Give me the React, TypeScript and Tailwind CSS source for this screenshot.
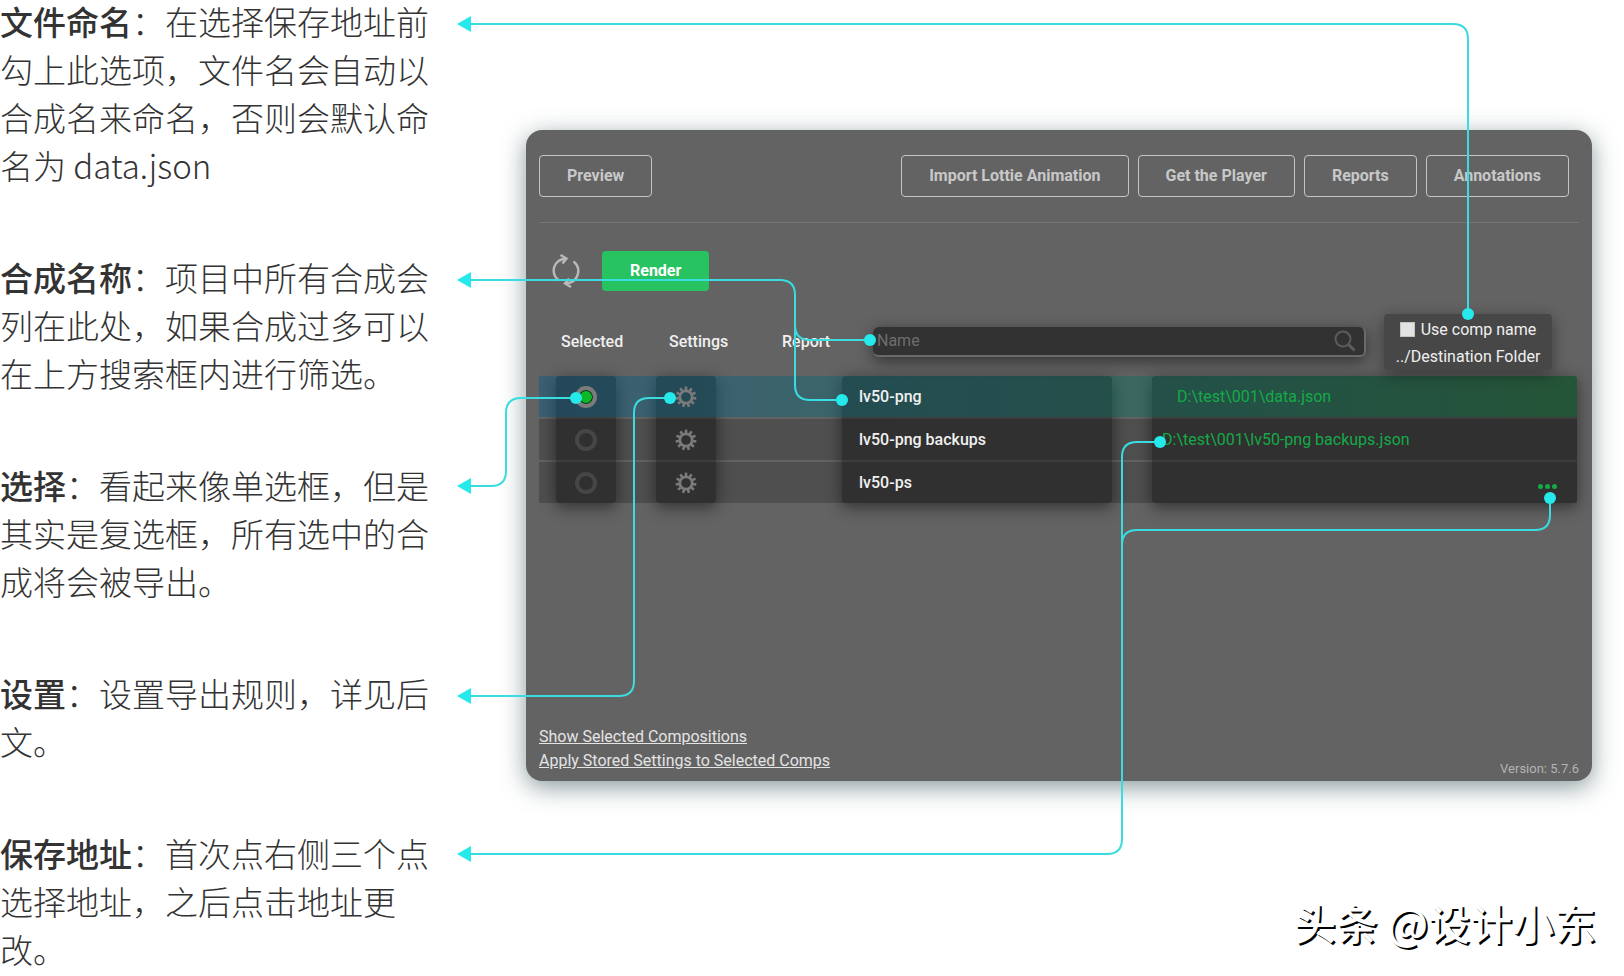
import { useState } from "react";

interface Note {
  title: string;
  text: string;
}

interface Comp {
  id: number;
  name: string;
  destination: string;
  selected: boolean;
  centered?: boolean;
}

const notes: Note[] = [
  { title: "文件命名", text: "在选择保存地址前勾上此选项，文件名会自动以合成名来命名，否则会默认命名为 data.json" },
  { title: "合成名称", text: "项目中所有合成会列在此处，如果合成过多可以在上方搜索框内进行筛选。" },
  { title: "选择", text: "看起来像单选框，但是其实是复选框，所有选中的合成将会被导出。" },
  { title: "设置", text: "设置导出规则，详见后文。" },
  { title: "保存地址", text: "首次点右侧三个点选择地址，之后点击地址更改。" },
];

const initialComps: Comp[] = [
  { id: 1, name: "lv50-png", destination: "D:\\test\\001\\data.json", selected: true, centered: true },
  { id: 2, name: "lv50-png backups", destination: "D:\\test\\001\\lv50-png backups.json", selected: false },
  { id: 3, name: "lv50-ps", destination: "", selected: false },
];

const toolbar = ["Import Lottie Animation", "Get the Player", "Reports", "Annotations"];

const arrows = [24, 280, 486, 696, 854];

const lines = [
  "M470 24H1453Q1468 24 1468 39V314",
  "M470 280H780Q795 280 795 295V385Q795 400 810 400H842",
  "M795 325Q795 340 810 340H870",
  "M470 486H491Q506 486 506 471V413Q506 398 521 398H576",
  "M470 696H619Q634 696 634 681V413Q634 398 649 398H670",
  "M470 854H1107Q1122 854 1122 839V457Q1122 442 1137 442H1160",
  "M1122 545Q1122 530 1137 530H1535Q1550 530 1550 515V498",
];

const dots = [
  [1468, 314],
  [870, 340],
  [842, 400],
  [576, 398],
  [670, 398],
  [1160, 442],
  [1550, 498],
];

function OutlineButton({ label }: { label: string }) {
  return (
    <button className="h-[42px] rounded border border-[#c4c4c4] px-[27px] text-base font-bold text-[#c8c8c8]">
      {label}
    </button>
  );
}

function RefreshIcon() {
  return (
    <svg width="28" height="34" viewBox="0 0 28 34" fill="none" stroke="#b9b9b9" strokeWidth="2.4">
      <path d="M7 26.5C-1.5 20 0 6 14 4.5" />
      <path d="M8.5 1L14.5 4.5L10.5 9.5" />
      <path d="M21.5 7.5C29.5 14 27.5 28 14 29.5" />
      <path d="M19 33L13 29.5L17 24.5" />
    </svg>
  );
}

function GearIcon() {
  const teeth = Array.from({ length: 11 }, (_, i) => (i * 360) / 11);
  return (
    <svg width="22" height="22" viewBox="-11 -11 22 22" fill="none" stroke="#7b7b7b">
      <circle r="6.2" strokeWidth="2.8" />
      {teeth.map((angle) => (
        <path key={angle} d="M0 -7V-10.4" strokeWidth="2.6" transform={`rotate(${angle})`} />
      ))}
    </svg>
  );
}

function SearchIcon() {
  return (
    <svg width="22" height="22" viewBox="0 0 22 22" fill="none" stroke="#5c5c5c">
      <circle cx="9" cy="9" r="7.5" strokeWidth="2" />
      <path d="M14.5 14.5L20.5 20.5" strokeWidth="3" />
    </svg>
  );
}

// Arrows and callout lines that run from the notes to the panel
function Callouts() {
  return (
    <svg className="pointer-events-none absolute left-0 top-0" width="1624" height="976" fill="none">
      {lines.map((d) => (
        <path key={d} d={d} stroke="#3adcdf" strokeWidth="2" />
      ))}
      {arrows.map((y) => (
        <path key={y} d={`M457 ${y}L471 ${y - 8}V${y + 8}Z`} fill="#25e9ea" />
      ))}
      {dots.map(([x, y]) => (
        <circle key={`${x}-${y}`} cx={x} cy={y} r="6" fill="#25e9ea" />
      ))}
    </svg>
  );
}

function App() {
  const [comps, setComps] = useState<Comp[]>(initialComps);
  const [search, setSearch] = useState("");

  const handleToggle = (id: number) => {
    setComps((prev) => prev.map((comp) => (comp.id === id ? { ...comp, selected: !comp.selected } : comp)));
  };

  const visible = comps.filter((comp) => comp.name.includes(search));

  return (
    <div className="relative flex items-start bg-white font-['Roboto',sans-serif]">
      {/* Notes */}
      <div className="-mt-[3px] flex w-[440px] shrink-0 flex-col gap-16 font-['Noto_Sans_CJK_SC',sans-serif] text-[33px] font-light leading-[48px] text-[#333333]">
        {notes.map((note) => (
          <p key={note.title}>
            <strong className="font-medium">{note.title}</strong>：{note.text}
          </p>
        ))}
      </div>

      <div className="ml-[86px] mr-8 mt-[130px] min-w-0 flex-1">
        {/* Panel */}
        <div className="rounded-2xl bg-[#636363] px-[13px] pb-[6px] pt-[25px] shadow-[0_6px_24px_rgba(40,70,75,0.55)]">
          <div className="flex items-center justify-between border-b border-[#757575] pb-[25px] pr-[10px]">
            <OutlineButton label="Preview" />
            <div className="flex gap-[9px]">
              {toolbar.map((label) => (
                <OutlineButton key={label} label={label} />
              ))}
            </div>
          </div>

          <div className="mt-7 flex items-center gap-[22px] pl-[13px]">
            <button aria-label="Refresh">
              <RefreshIcon />
            </button>
            <button className="h-10 rounded bg-[#27c360] px-7 text-base font-bold text-white">Render</button>
          </div>

          {/* Compositions */}
          <div className="relative mt-[19px] pr-[2px]">
            <div className="absolute bottom-[2px] left-0 right-[2px] top-[66px] flex">
              <div className="ml-[17px] w-[60px] rounded bg-[#3c3c3c] shadow-[0_4px_16px_rgba(0,0,0,0.5)]" />
              <div className="ml-10 w-[60px] rounded bg-[#3c3c3c] shadow-[0_4px_16px_rgba(0,0,0,0.5)]" />
              <div className="ml-[126px] w-[270px] rounded bg-[#3c3c3c] shadow-[0_4px_16px_rgba(0,0,0,0.5)]" />
              <div className="ml-10 flex-1 rounded bg-[#3c3c3c] shadow-[0_4px_16px_rgba(0,0,0,0.5)]" />
            </div>
            <table className="relative w-full table-fixed border-separate border-spacing-x-0 border-spacing-y-[2px] text-base font-medium text-[#f0f0f0]">
              <colgroup>
                <col className="w-[97px]" />
                <col className="w-[100px]" />
                <col className="w-[106px]" />
                <col className="w-[310px]" />
                <col />
              </colgroup>
              <thead>
                <tr className="h-[62px] text-left">
                  <th className="pb-[2px] pl-[22px] font-medium">Selected</th>
                  <th className="pb-[2px] pl-[33px] font-medium">Settings</th>
                  <th className="pb-[2px] pl-[46px] font-medium">Report</th>
                  <th colSpan={2} className="pb-[2px] font-normal">
                    <div className="flex items-center gap-[18px] pl-[31px] pr-[25px]">
                      <div className="flex h-[30px] min-w-0 flex-1 items-center rounded-md border-b-2 border-r-2 border-[#6a6a6a] bg-[#323232] pr-2 shadow-[0_4px_16px_rgba(0,0,0,0.5)]">
                        <input
                          type="text"
                          aria-label="Name"
                          placeholder="Name"
                          value={search}
                          onChange={(e) => setSearch(e.target.value)}
                          className="min-w-0 flex-1 bg-transparent pl-1 outline-none placeholder:text-[#6e6e6e]"
                        />
                        <SearchIcon />
                      </div>
                      <div className="flex h-14 w-[168px] flex-col items-center rounded bg-[#474747] pt-[2px] shadow-[0_4px_16px_rgba(0,0,0,0.4)]">
                        <label className="flex items-center gap-[6px] leading-[27px]">
                          <input type="checkbox" className="size-[15px] appearance-none border border-[#c4c4c4] bg-[#e2e2e2] checked:bg-[#27c360]" />
                          Use comp name
                        </label>
                        <span className="leading-[27px]">../Destination Folder</span>
                      </div>
                    </div>
                  </th>
                </tr>
              </thead>
              <tbody>
                {visible.map((comp) => (
                  <tr
                    key={comp.id}
                    className={
                      comp.selected
                        ? "h-[41px] bg-black/20 bg-linear-to-r from-[#008fdb]/25 to-[#00c44a]/25"
                        : "h-[41px] bg-black/20"
                    }
                  >
                    <td className="pl-9">
                      <input
                        type="checkbox"
                        aria-label={`Select ${comp.name}`}
                        checked={comp.selected}
                        onChange={() => handleToggle(comp.id)}
                        className="block size-[22px] appearance-none rounded-full border-4 border-[#464646] checked:border-[#7b7b7b] checked:bg-[#0cb828] checked:shadow-[inset_0_0_0_1px_#10231a]"
                      />
                    </td>
                    <td className="pl-[39px]">
                      <button aria-label={`Settings for ${comp.name}`} className="block">
                        <GearIcon />
                      </button>
                    </td>
                    <td></td>
                    <td className="pl-[17px]">{comp.name}</td>
                    <td className={comp.centered ? "pl-[25px] font-normal" : "pl-[10px] font-normal"}>
                      {comp.destination ? (
                        <button className="text-[#14aa48]">{comp.destination}</button>
                      ) : (
                        <button aria-label="Choose destination" className="ml-auto mr-5 mt-2 flex gap-[2px]">
                          <span className="size-[5px] rounded-full bg-[#14aa48]" />
                          <span className="size-[5px] rounded-full bg-[#14aa48]" />
                          <span className="size-[5px] rounded-full bg-[#14aa48]" />
                        </button>
                      )}
                    </td>
                  </tr>
                ))}
              </tbody>
            </table>
          </div>

          <div className="mt-[220px] flex items-end justify-between">
            <div className="flex flex-col items-start pb-[2px] text-base leading-6 text-[#e4e4e4]">
              <a href="#" className="underline">Show Selected Compositions</a>
              <a href="#" className="underline">Apply Stored Settings to Selected Comps</a>
            </div>
            <span className="text-[13px] leading-3 text-[#b4b4b4]">Version: 5.7.6</span>
          </div>
        </div>

        <p className="-mr-1 mt-[111px] text-right font-['Noto_Sans_CJK_SC',sans-serif] text-[42px] font-medium leading-[60px] text-white [text-shadow:2px_2px_0_#000]">
          头条 @设计小东
        </p>
      </div>

      <Callouts />
    </div>
  );
}

export default App;
